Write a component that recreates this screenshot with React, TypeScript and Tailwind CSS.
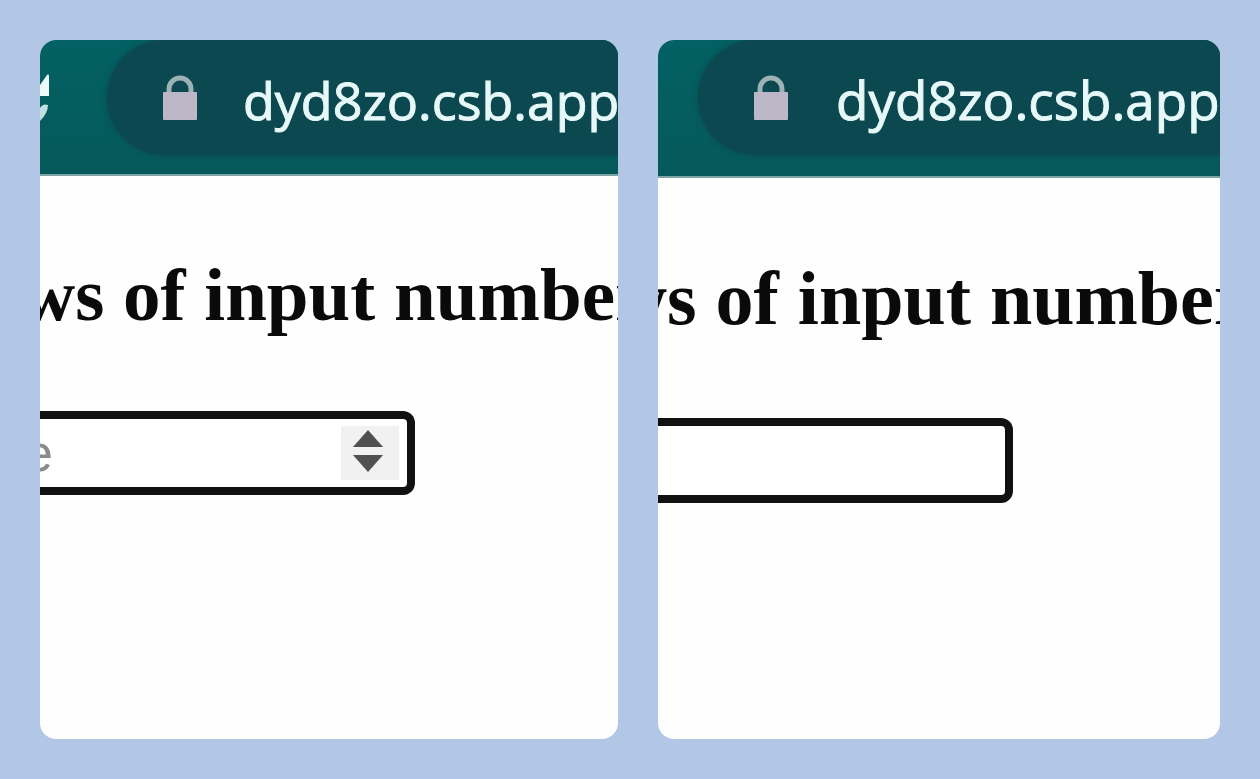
import React from "react";

function Lock() {
  return (
    <svg viewBox="0 0 34 46" className="mb-1 h-[46px] w-[34px] shrink-0" aria-hidden="true">
      <path d="M6 20V14a11 11 0 0 1 22 0V20" fill="none" stroke="#9db2b5" strokeWidth="5" />
      <rect x="0" y="17" width="34" height="28" rx="1" fill="#bcb8c8" />
    </svg>
  );
}

function Reload() {
  return (
    <svg viewBox="0 0 10 50" className="h-[50px] w-[10px]" aria-hidden="true">
      <path d="M0 13 L7 3 Q9 1 9 5 V24 H0Z" fill="#eefafa" />
      <path d="M0 36 Q3 31 8 33 Q8 41 0 49Z" fill="#c3dfe0" />
    </svg>
  );
}

function SpinButtons() {
  return (
    <div className="absolute right-4 flex h-[54px] w-[58px] flex-col items-center justify-center gap-2 bg-[#f1f1f1] pr-1 pb-1">
      <button type="button" aria-label="Increase" className="block">
        <svg viewBox="0 0 30 17" className="block h-[17px] w-[30px]">
          <path d="M15 0 L30 17H0Z" fill="#505050" />
        </svg>
      </button>
      <button type="button" aria-label="Decrease" className="block">
        <svg viewBox="0 0 30 17" className="block h-[17px] w-[30px]">
          <path d="M0 0H30L15 17Z" fill="#505050" />
        </svg>
      </button>
    </div>
  );
}

const panel = "min-w-0 overflow-hidden rounded-2xl bg-[#fefefe]";
const bar = "flex items-start border-b-2 border-[#7da4a5] bg-linear-to-b from-[#026164] to-[#06595a]";
const pill =
  "flex h-[115px] min-w-0 flex-1 items-center rounded-l-full bg-[#0c4850] pt-1 pl-14 shadow-[0_0_6px_#0c4850]";
const address =
  "font-['Open_Sans',sans-serif] leading-[70px] whitespace-nowrap text-[#e6f8f8] [-webkit-text-stroke:1px_#e6f8f8]";
const field =
  "block w-full appearance-none border-8 border-[#111111] bg-white font-['Liberation_Sans',sans-serif] text-[52px] text-black outline-none placeholder:text-[#8b8b8b] [appearance:textfield] rounded-r-[12px] border-l-0";

export default function App() {
  return (
    <main className="grid min-h-screen grid-cols-[578fr_562fr] gap-10 bg-[#b2c6e6] p-10">
      <section className={panel}>
        <header className={`${bar} h-[136px]`}>
          <button type="button" aria-label="Reload" className="mt-8 w-[67px] shrink-0">
            <Reload />
          </button>
          <div className={pill}>
            <Lock />
            <span className={`${address} ml-[46px] text-[52px]`}>dyd8zo.csb.app</span>
          </div>
        </header>
        <h1 className="mt-[77px] -ml-[19px] font-['Liberation_Serif',serif] text-[75px] leading-[84px] font-bold whitespace-nowrap text-[#0a0a0a]">
          ws of input number
        </h1>
        <div className="relative mt-[74px] -ml-4 flex w-[391px] items-center">
          <input type="number" aria-label="Rows" placeholder="e" className={`${field} h-[84px]`} />
          <SpinButtons />
        </div>
      </section>

      <section className={panel}>
        <header className={`${bar} h-[138px] pl-10`}>
          <div className={pill}>
            <Lock />
            <span className={`${address} ml-12 text-[53px]`}>dyd8zo.csb.app</span>
          </div>
        </header>
        <h1 className="mt-[78px] -ml-[46px] font-['Liberation_Serif',serif] text-[76px] leading-[84px] font-bold whitespace-nowrap text-[#0a0a0a]">
          ws of input number
        </h1>
        <div className="mt-[78px] w-[355px]">
          <input type="text" aria-label="Rows" className={`${field} h-[85px]`} />
        </div>
      </section>
    </main>
  );
}
